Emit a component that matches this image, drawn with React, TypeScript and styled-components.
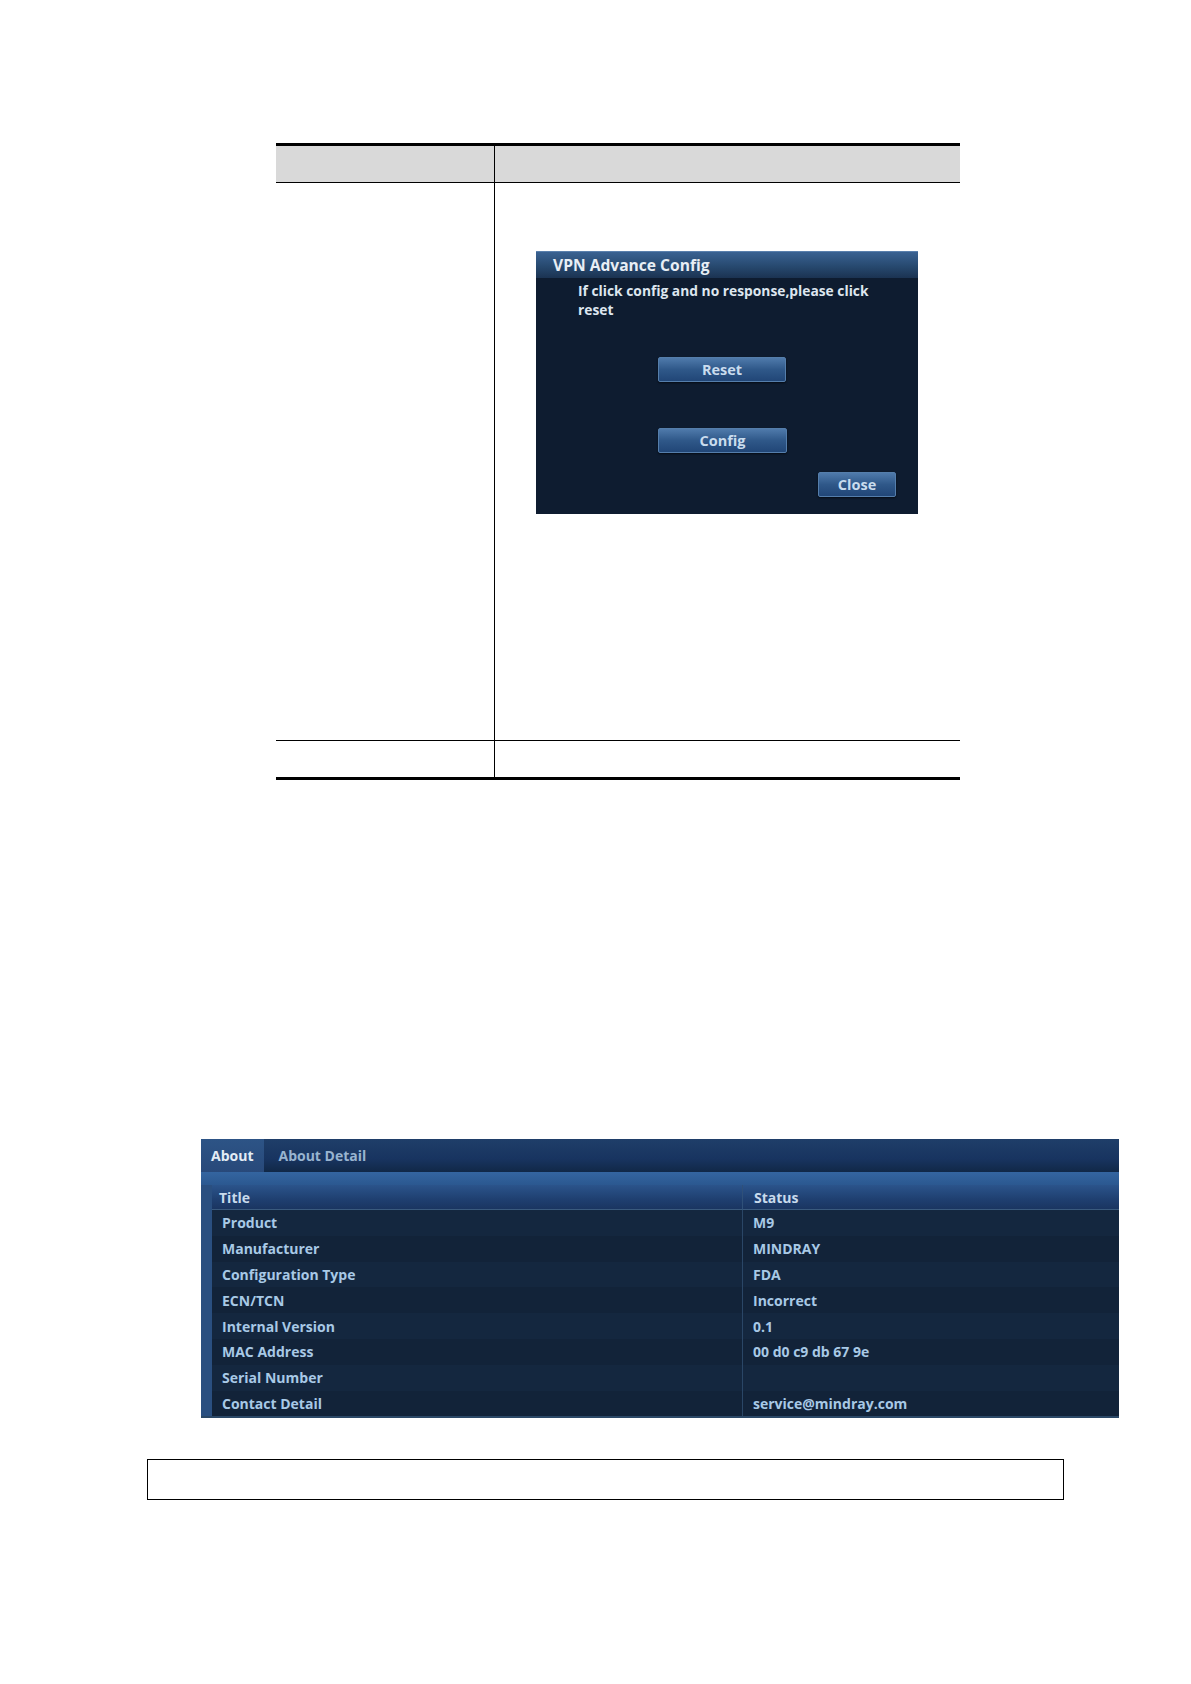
import styled, { createGlobalStyle } from 'styled-components';

const GlobalStyle = createGlobalStyle`
  html, body {
    margin: 0;
    padding: 0;
    background: #ffffff;
  }
  body {
    font-family: "Open Sans", Lato, "Liberation Sans", sans-serif;
  }
`

const Page = styled.div`
  width: 1191px;
  min-height: 1684px;
  padding-top: 143px;
  box-sizing: border-box;
`

/* --- document table --- */
const DocTable = styled.div`
  margin-left: 276px;
  width: 684px;
  border-top: 3px solid #000;
  border-bottom: 3px solid #000;
`

const DocRow = styled.div<{ $h: number; $head?: boolean; $last?: boolean }>`
  display: grid;
  grid-template-columns: 219px 1fr;
  height: ${p => p.$h}px;
  background: ${p => (p.$head ? '#d9d9d9' : 'transparent')};
  border-bottom: ${p => (p.$last ? 'none' : '1px solid #000')};
`

const DocCell = styled.div<{ $divider?: boolean }>`
  border-right: ${p => (p.$divider ? '1px solid #000' : 'none')};
`

const ShotCell = styled.div`
  padding: 68px 0 0 41px;
`

/* --- VPN dialog --- */
const Dialog = styled.div`
  width: 382px;
  height: 263px;
  display: flex;
  flex-direction: column;
  background: #0e1c30;
  box-shadow: inset 0 1px 0 #5479a5;
`

const DialogTitle = styled.div`
  height: 26px;
  flex: none;
  padding-left: 17px;
  display: flex;
  align-items: center;
  background: linear-gradient(#3a6292, #27496f 55%, #1b3352);
  border-top: 1px solid #5a80ad;
  color: #e8eef5;
  font-size: 15.6px;
  font-weight: 700;
`

const DialogBody = styled.div`
  flex: 1;
  display: flex;
  flex-direction: column;
  padding: 3px 22px 17px 42px;
`

const Message = styled.div`
  width: 300px;
  color: #dde6ef;
  font-size: 13.8px;
  font-weight: 700;
  line-height: 19px;
`

const DlgButton = styled.div<{ $w: number; $top: number; $right?: boolean }>`
  width: ${p => p.$w}px;
  height: 25px;
  margin-top: ${p => p.$top}px;
  margin-left: ${p => (p.$right ? 'auto' : '80px')};
  box-sizing: border-box;
  display: flex;
  align-items: center;
  justify-content: center;
  border: 1px solid #557eab;
  border-radius: 2px;
  background: linear-gradient(#4f7aab, #2f5889 50%, #214677);
  box-shadow: 0 1px 2px rgba(0, 0, 0, 0.6);
  color: #c9dcee;
  font-size: 14.5px;
  font-weight: 700;
`

/* --- About panel --- */
const AboutPanel = styled.div`
  margin: 359px 0 0 201px;
  width: 918px;
  background: #13243b;
  border-bottom: 2px solid #2b4867;
`

const TabBar = styled.div`
  height: 33px;
  display: flex;
  background: linear-gradient(#1f3e69, #183460 60%, #112847);
`

const Tab = styled.div<{ $active?: boolean }>`
  padding: 0 ${p => (p.$active ? '11px' : '12px')} 0 ${p => (p.$active ? '10px' : '14px')};
  display: flex;
  align-items: center;
  background: ${p => (p.$active ? 'linear-gradient(#2d5486, #28497a)' : 'transparent')};
  color: ${p => (p.$active ? '#e3ecf5' : '#98b4d0')};
  font-size: 14px;
  font-weight: 700;
`

const Band = styled.div`
  height: 13px;
  background: linear-gradient(#3465a0, #2b5890);
`

const GridWrap = styled.div`
  padding-left: 11px;
  background: linear-gradient(90deg, #2a4f80 0, #2a4f80 11px, transparent 11px);
`

const InfoGrid = styled.div`
  display: grid;
  grid-template-columns: 530px 1fr;
`

const HeadCell = styled.div<{ $divider?: boolean }>`
  height: 25px;
  box-sizing: border-box;
  padding-left: ${p => (p.$divider ? '11px' : '7px')};
  display: flex;
  align-items: center;
  background: linear-gradient(#2b548b, #1f3f70 60%, #1a3561);
  border-bottom: 1px solid #3a5a7e;
  border-left: ${p => (p.$divider ? '1px solid #2f5079' : 'none')};
  color: #c8daec;
  font-size: 14px;
  font-weight: 700;
`

const InfoCell = styled.div<{ $divider?: boolean; $odd?: boolean }>`
  height: 25.8px;
  box-sizing: border-box;
  padding-left: ${p => (p.$divider ? '10px' : '10px')};
  display: flex;
  align-items: center;
  background: ${p => (p.$odd ? '#14273f' : '#122339')};
  border-left: ${p => (p.$divider ? '1px solid #2a4666' : 'none')};
  color: #a8c9e6;
  font-size: 14px;
  font-weight: 700;
  white-space: nowrap;
`

const NoteBox = styled.div`
  margin: 41px 0 0 147px;
  width: 917px;
  height: 41px;
  box-sizing: border-box;
  border: 1.5px solid #000;
`

const rows: [string, string][] = [
  ['Product', 'M9'],
  ['Manufacturer', 'MINDRAY'],
  ['Configuration Type', 'FDA'],
  ['ECN/TCN', 'Incorrect'],
  ['Internal Version', '0.1'],
  ['MAC Address', '00 d0 c9 db 67 9e'],
  ['Serial Number', ''],
  ['Contact Detail', 'service@mindray.com'],
]

export default function App() {
  return (
    <>
      <GlobalStyle />
      <Page>
        <DocTable>
          <DocRow $h={36} $head>
            <DocCell $divider />
            <DocCell />
          </DocRow>
          <DocRow $h={557}>
            <DocCell $divider />
            <ShotCell>
              <Dialog>
                <DialogTitle>VPN Advance Config</DialogTitle>
                <DialogBody>
                  <Message>If click config and no response,please click reset</Message>
                  <DlgButton $w={128} $top={38}>Reset</DlgButton>
                  <DlgButton $w={129} $top={46}>Config</DlgButton>
                  <DlgButton $w={78} $top={19} $right>Close</DlgButton>
                </DialogBody>
              </Dialog>
            </ShotCell>
          </DocRow>
          <DocRow $h={36} $last>
            <DocCell $divider />
            <DocCell />
          </DocRow>
        </DocTable>

        <AboutPanel>
          <TabBar>
            <Tab $active>About</Tab>
            <Tab>About Detail</Tab>
          </TabBar>
          <Band />
          <GridWrap>
            <InfoGrid>
              <HeadCell>Title</HeadCell>
              <HeadCell $divider>Status</HeadCell>
              {rows.map(([label, value], i) => (
                <>
                  <InfoCell key={label} $odd={i % 2 === 0}>{label}</InfoCell>
                  <InfoCell key={label + '-v'} $divider $odd={i % 2 === 0}>{value}</InfoCell>
                </>
              ))}
            </InfoGrid>
          </GridWrap>
        </AboutPanel>

        <NoteBox />
      </Page>
    </>
  )
}
